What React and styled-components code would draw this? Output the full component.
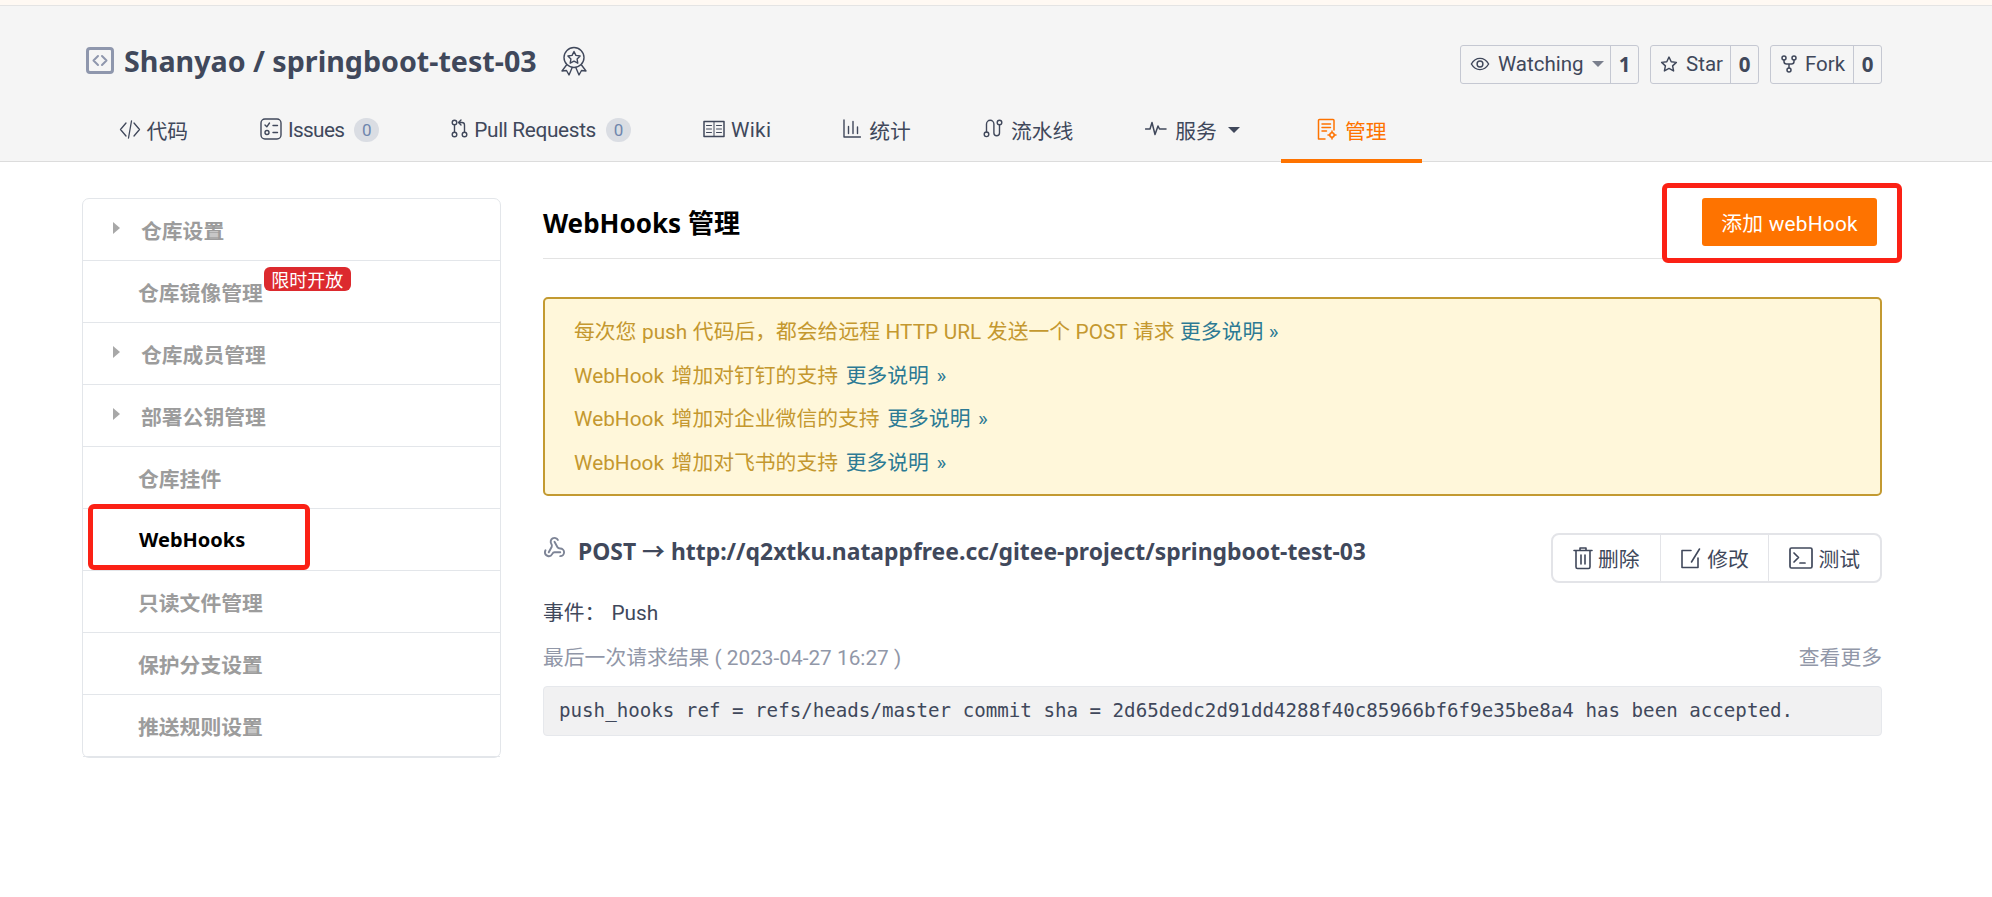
import React from "react";
import styled, { createGlobalStyle } from "styled-components";
import { Webhook } from "lucide-react";

const GlobalStyle = createGlobalStyle`
  html, body {
    margin: 0;
    padding: 0;
    background: #ffffff;
  }
  body {
    font-family: Roboto, "Noto Sans CJK SC", sans-serif;
    font-size: 20.8px;
    color: #40485b;
    overflow: hidden;
  }
`;

const boldFont = `"Noto Sans", "Noto Sans CJK SC", sans-serif`;

const Styled = {
  TopStrip: styled.div`
    height: 5px;
    background: #fff9f3;
    border-bottom: 1px solid #e4e4e4;
  `,
  Header: styled.header`
    height: 155px;
    background: #f5f5f5;
    border-bottom: 1px solid #dcdcdc;
    display: flex;
    flex-direction: column;
  `,
  TitleRow: styled.div`
    display: flex;
    align-items: center;
    justify-content: space-between;
    height: 109px;
    flex: none;
    padding: 0 110px 0 86px;
  `,
  Title: styled.div`
    display: flex;
    align-items: center;
  `,
  RepoName: styled.h1`
    margin: 0 0 0 10px;
    font-family: ${boldFont};
    font-size: 28.65px;
    font-weight: 700;
    line-height: 36px;
    color: #40485b;
  `,
  Medal: styled.span`
    display: flex;
    margin-left: 23px;
    color: #40485b;
  `,
  Stats: styled.div`
    display: flex;
    gap: 11px;
    margin-top: 7px;
  `,
  Stat: styled.div`
    display: flex;
    height: 39px;
    box-sizing: border-box;
    border: 1px solid #c5c8d2;
    border-radius: 3px;
    font-size: 20.5px;
    color: #40485b;
  `,
  StatLabel: styled.div`
    display: flex;
    align-items: center;
    gap: 8px;
    padding-left: ${(p) => p.$pad || 9}px;
    width: ${(p) => p.$width}px;
    box-sizing: border-box;
    white-space: nowrap;
  `,
  StatCount: styled.div`
    display: flex;
    align-items: center;
    justify-content: center;
    box-sizing: border-box;
    border-left: 1px solid #c5c8d2;
    width: 28px;
    font-family: ${boldFont};
    font-weight: 700;
  `,
  Caret: styled.span`
    width: 0;
    height: 0;
    border-left: 6px solid transparent;
    border-right: 6px solid transparent;
    border-top: 6px solid ${(p) => p.$color || "#7a7f8d"};
    margin-left: ${(p) => p.$gap || 0}px;
    margin-right: ${(p) => p.$after || 0}px;
  `,
  Tabs: styled.nav`
    display: flex;
    height: 46px;
    padding-left: 82.5px;
  `,
  Tab: styled.a`
    display: flex;
    align-items: center;
    gap: ${(p) => p.$gap || 6}px;
    height: 48px;
    box-sizing: border-box;
    padding: 0 36px 14px;
    color: ${(p) => (p.$active ? "#fe7300" : "#40485b")};
    border-bottom: 4px solid ${(p) => (p.$active ? "#fe7300" : "transparent")};
    svg {
      margin-top: -3px;
    }
  `,
  TabText: styled.span`
    letter-spacing: ${(p) => p.$tracking || 0}px;
  `,
  Count: styled.span`
    display: flex;
    align-items: center;
    justify-content: center;
    width: 25px;
    height: 24px;
    margin-left: 4px;
    border-radius: 12px;
    background: #dadde3;
    color: #6f86ad;
    font-size: 17px;
  `,
  Page: styled.main`
    display: flex;
    align-items: flex-start;
    gap: 42px;
    padding: 36px 0 0 82px;
  `,
  Side: styled.aside`
    position: relative;
    width: 419px;
    box-sizing: border-box;
    border: 1px solid #e3e6ea;
    border-radius: 7px;
  `,
  SideItem: styled.div`
    display: flex;
    align-items: center;
    height: 62px;
    box-sizing: border-box;
    padding-left: ${(p) => (p.$arrow ? 30 : p.$active ? 56 : 55)}px;
    font-family: ${boldFont};
    font-weight: 700;
    font-size: ${(p) => (p.$active ? 20 : 20.8)}px;
    color: ${(p) => (p.$active ? "#000000" : "#9c9c9c")};
    border-bottom: 1px solid #e3e6ea;
    &:last-child {
      border-bottom: 0;
      height: 61px;
    }
  `,
  Arrow: styled.span`
    width: 0;
    height: 0;
    border-top: 6px solid transparent;
    border-bottom: 6px solid transparent;
    border-left: 7px solid #a8a8a8;
    margin-right: 21px;
    margin-top: -4px;
  `,
  Limited: styled.span`
    display: flex;
    align-items: center;
    justify-content: center;
    width: 87px;
    height: 24px;
    margin: -25px 0 0 1px;
    border-radius: 6px;
    background: #dc2a2e;
    color: #ffffff;
    font-size: 18px;
    font-weight: 400;
  `,
  Mark: styled.span`
    position: absolute;
    box-sizing: border-box;
    border: 5px solid #fb2115;
    border-radius: 6px;
    pointer-events: none;
  `,
  Content: styled.section`
    width: 1339px;
  `,
  ContentHead: styled.div`
    display: flex;
    align-items: flex-start;
    justify-content: space-between;
    height: 60px;
    border-bottom: 1px solid #e3e3e3;
    padding-right: 5px;
  `,
  ContentTitle: styled.h2`
    margin: 7px 0 0;
    font-family: ${boldFont};
    font-size: 26px;
    font-weight: 700;
    line-height: 36px;
    color: #000000;
  `,
  AddWrap: styled.div`
    position: relative;
  `,
  AddButton: styled.button`
    display: block;
    width: 175px;
    height: 48px;
    border: 0;
    border-radius: 3px;
    background: #fe7300;
    color: #ffffff;
    font-family: inherit;
    font-size: 20.8px;
    letter-spacing: 0.25px;
  `,
  Notice: styled.div`
    height: 199px;
    margin-top: 38px;
    box-sizing: border-box;
    padding: 12px 29px;
    background: #fff7da;
    border: 2px solid #c39a31;
    border-radius: 5px;
    color: #c4982f;
    line-height: 43.7px;
  `,
  NoticeLine: styled.div`
    white-space: nowrap;
    word-spacing: ${(p) => p.$spacing}px;
  `,
  NoticeLink: styled.a`
    color: #2c7a94;
  `,
  Hook: styled.div`
    margin-top: 37px;
  `,
  HookHead: styled.div`
    display: flex;
    align-items: flex-start;
    justify-content: space-between;
  `,
  HookUrl: styled.div`
    display: flex;
    align-items: center;
    gap: 12px;
    height: 33px;
    font-family: ${boldFont};
    font-size: 22.9px;
    font-weight: 700;
    color: #40485b;
    svg {
      margin-top: -5px;
    }
  `,
  Actions: styled.div`
    display: flex;
    width: 331px;
    height: 50px;
    box-sizing: border-box;
    border: 2px solid #e3e4e8;
    border-radius: 8px;
  `,
  Action: styled.a`
    flex: ${(p) => p.$flex};
    display: flex;
    align-items: center;
    justify-content: center;
    gap: 5px;
    color: #40485b;
    & + & {
      border-left: 1px solid #e3e4e8;
    }
  `,
  EventRow: styled.div`
    display: flex;
    gap: 6px;
    margin-top: 14px;
    line-height: 32px;
  `,
  ResultRow: styled.div`
    display: flex;
    justify-content: space-between;
    margin-top: 13px;
    line-height: 32px;
    color: #9197a8;
  `,
  Result: styled.pre`
    margin: 12px 0 0;
    height: 50px;
    box-sizing: border-box;
    padding: 0 15px;
    border: 1px solid #e6e8ec;
    border-radius: 4px;
    background: #f1f1f2;
    color: #40485b;
    font-family: "DejaVu Sans Mono", monospace;
    font-size: 19.16px;
    line-height: 48px;
  `,
};

const Line = ({ size = 22, h, sw = 1.5, box, children, color = "currentColor" }) => (
  <svg
    width={size}
    height={h || size}
    viewBox={box || `0 0 ${size} ${h || size}`}
    fill="none"
    stroke={color}
    strokeWidth={sw}
    strokeLinecap="round"
    strokeLinejoin="round"
  >
    {children}
  </svg>
);

const RepoIcon = () => (
  <Line size={28} h={27} sw={3} color="#8f97ad">
    <rect x="1.5" y="1.5" width="25" height="24" rx="2.5" />
    <path d="M12 9l-4.5 4.5L12 18M16 9l4.5 4.5L16 18" strokeWidth="2" />
  </Line>
);

const MedalIcon = () => (
  <Line size={28} h={30} sw={1.4}>
    <circle cx="14" cy="11.5" r="10" />
    <path d="M14 5.5l1.9 3.9 4.2.6-3 3 .7 4.2-3.8-2-3.8 2 .7-4.2-3-3 4.2-.6z" />
    <path d="M6.5 19L2 25l4.5-.5L9 29l3-7M21.5 19l4.5 6-4.5-.5L19 29l-3-7" />
  </Line>
);

const CodeIcon = () => (
  <Line sw={1.3}>
    <path d="M7 5l-5.5 6.5L7 18M15 5l5.5 6.5L15 18M12.5 3L9.5 20" />
  </Line>
);

const IssueIcon = () => (
  <Line sw={1.4}>
    <rect x="1" y="1" width="20" height="20" rx="4" />
    <path d="M5 7l1.8 1.8L9.5 5M13 7.5h4.5M13 14.5h4.5" />
    <circle cx="7" cy="14.5" r="2" />
  </Line>
);

const PullIcon = () => (
  <Line size={17} h={19} sw={1.4}>
    <circle cx="3.5" cy="3.5" r="2.3" />
    <circle cx="3.5" cy="15.5" r="2.3" />
    <circle cx="13.5" cy="15.5" r="2.3" />
    <path d="M3.5 5.8v7.4M13.5 13.2V6q0-2.5-2.5-2.5H8M10 1L7.5 3.5 10 6" />
  </Line>
);

const WikiIcon = () => (
  <Line sw={1.5}>
    <rect x="1" y="3.5" width="20" height="15" />
    <path d="M11 3.5v15M3.5 7.5h5M3.5 11h5M3.5 14.5h5M13.5 7.5h5M13.5 11h5M13.5 14.5h5" strokeWidth="1" />
  </Line>
);

const StatsIcon = () => (
  <Line size={18} h={19} sw={1.4}>
    <path d="M1 1v17h16.5M5.5 14.5V7.5M10 14.5V2.5M14.5 14.5V8" />
  </Line>
);

const PipelineIcon = () => (
  <Line size={20} h={19} sw={1.4}>
    <circle cx="3.5" cy="15.3" r="2.3" />
    <circle cx="16.5" cy="3.5" r="2.3" />
    <path d="M3.5 13V5a3.7 3.7 0 0 1 7.4 0v9a2.8 2.8 0 0 0 5.6 0V5.8" />
  </Line>
);

const PulseIcon = () => (
  <Line size={22} h={15} sw={1.5}>
    <path d="M0.5 8h4.5l2-6.5 3 12 3-8.5 1.5 3h6.5" />
  </Line>
);

const ManageIcon = () => (
  <Line size={20} h={22} sw={1.5}>
    <path d="M8 21H1.5V2.5a1 1 0 0 1 1-1H16a1 1 0 0 1 1 1V12" />
    <path d="M5 6h8.5M5 9.5h8.5M5 13h4.5" />
    <circle cx="15" cy="17" r="2.2" />
    <path d="M15 13v1.5M15 19.5V21M11 17h1.5M17.5 17H19" />
  </Line>
);

const EyeIcon = () => (
  <Line size={20} box="0 0 22 22" sw={1.6}>
    <path d="M1.5 11C4 6.8 7.2 4.8 11 4.8s7 2 9.5 6.2c-2.5 4.2-5.7 6.2-9.5 6.2S4 15.2 1.5 11z" />
    <circle cx="11" cy="11" r="3.2" />
  </Line>
);

const StarIcon = () => (
  <Line size={18} box="0 0 22 22" sw={1.8}>
    <path d="M11 2.5l2.7 5.7 6.3.8-4.6 4.3 1.2 6.2-5.6-3.1-5.6 3.1 1.2-6.2L2 9l6.3-.8z" />
  </Line>
);

const ForkIcon = () => (
  <Line size={16} h={20} sw={1.5}>
    <circle cx="3" cy="4" r="2" />
    <circle cx="13" cy="4" r="2" />
    <circle cx="8" cy="16" r="2" />
    <path d="M3 6v1.5q0 2.5 2.5 2.5h5Q13 10 13 7.5V6M8 10v4" />
  </Line>
);

const TrashIcon = () => (
  <Line size={20} h={24} sw={1.6}>
    <path d="M1 4.5h18M7 4.5V2h6v2.5M3 4.5V21a1.5 1.5 0 0 0 1.5 1.5h11A1.5 1.5 0 0 0 17 21V4.5M8 9v9M12 9v9" />
  </Line>
);

const EditIcon = () => (
  <Line size={22} sw={1.6}>
    <path d="M11 3.5H2v17h16V11M19.5 2l-8 13" />
  </Line>
);

const TerminalIcon = () => (
  <Line size={24} h={22} sw={1.7}>
    <rect x="1" y="1" width="22" height="20" rx="1.5" />
    <path d="M5 6l4.5 4.5L5 15M11 16h5" />
  </Line>
);

const tabs = [
  { icon: <CodeIcon />, label: "代码" },
  { icon: <IssueIcon />, label: "Issues", count: 0, tracking: -0.7 },
  { icon: <PullIcon />, label: "Pull Requests", count: 0, tracking: -0.35 },
  { icon: <WikiIcon />, label: "Wiki", tracking: 0.3 },
  { icon: <StatsIcon />, label: "统计", gap: 8 },
  { icon: <PipelineIcon />, label: "流水线", gap: 8 },
  { icon: <PulseIcon />, label: "服务", gap: 8, caret: true },
  { icon: <ManageIcon />, label: "管理", gap: 8, active: true },
];

const sideItems = [
  { label: "仓库设置", arrow: true },
  { label: "仓库镜像管理", badge: "限时开放" },
  { label: "仓库成员管理", arrow: true },
  { label: "部署公钥管理", arrow: true },
  { label: "仓库挂件" },
  { label: "WebHooks", active: true },
  { label: "只读文件管理" },
  { label: "保护分支设置" },
  { label: "推送规则设置" },
];

const notices = [
  { text: "每次您 push 代码后，都会给远程 HTTP URL 发送一个 POST 请求", spacing: 0.4 },
  { text: "WebHook 增加对钉钉的支持", spacing: 2.5 },
  { text: "WebHook 增加对企业微信的支持", spacing: 2.5 },
  { text: "WebHook 增加对飞书的支持", spacing: 2.5 },
];

const App = () => (
  <>
    <GlobalStyle />
    <Styled.TopStrip />
    <Styled.Header>
      <Styled.TitleRow>
        <Styled.Title>
          <RepoIcon />
          <Styled.RepoName>Shanyao / springboot-test-03</Styled.RepoName>
          <Styled.Medal>
            <MedalIcon />
          </Styled.Medal>
        </Styled.Title>
        <Styled.Stats>
          <Styled.Stat>
            <Styled.StatLabel $width={149}>
              <EyeIcon />
              Watching
              <Styled.Caret />
            </Styled.StatLabel>
            <Styled.StatCount>1</Styled.StatCount>
          </Styled.Stat>
          <Styled.Stat>
            <Styled.StatLabel $width={79}>
              <StarIcon />
              Star
            </Styled.StatLabel>
            <Styled.StatCount>0</Styled.StatCount>
          </Styled.Stat>
          <Styled.Stat>
            <Styled.StatLabel $width={82} $pad={10}>
              <ForkIcon />
              Fork
            </Styled.StatLabel>
            <Styled.StatCount>0</Styled.StatCount>
          </Styled.Stat>
        </Styled.Stats>
      </Styled.TitleRow>
      <Styled.Tabs>
        {tabs.map((tab) => (
          <Styled.Tab key={tab.label} $active={tab.active} $gap={tab.gap}>
            {tab.icon}
            <Styled.TabText $tracking={tab.tracking}>{tab.label}</Styled.TabText>
            {tab.count !== undefined && <Styled.Count>{tab.count}</Styled.Count>}
            {tab.caret && <Styled.Caret $color="#40485b" $gap={3} $after={5} />}
          </Styled.Tab>
        ))}
      </Styled.Tabs>
    </Styled.Header>
    <Styled.Page>
      <Styled.Side>
        {sideItems.map((item) => (
          <Styled.SideItem key={item.label} $arrow={item.arrow} $active={item.active}>
            {item.arrow && <Styled.Arrow />}
            {item.label}
            {item.badge && <Styled.Limited>{item.badge}</Styled.Limited>}
          </Styled.SideItem>
        ))}
        <Styled.Mark style={{ left: 5, top: 305, width: 222, height: 66 }} />
      </Styled.Side>
      <Styled.Content>
        <Styled.ContentHead>
          <Styled.ContentTitle>WebHooks 管理</Styled.ContentTitle>
          <Styled.AddWrap>
            <Styled.AddButton>添加 webHook</Styled.AddButton>
            <Styled.Mark style={{ left: -40, top: -15, width: 240, height: 80 }} />
          </Styled.AddWrap>
        </Styled.ContentHead>
        <Styled.Notice>
          {notices.map((notice) => (
            <Styled.NoticeLine key={notice.text} $spacing={notice.spacing}>
              {notice.text} <Styled.NoticeLink>更多说明 »</Styled.NoticeLink>
            </Styled.NoticeLine>
          ))}
        </Styled.Notice>
        <Styled.Hook>
          <Styled.HookHead>
            <Styled.HookUrl>
              <Webhook size={23} strokeWidth={2} color="#7d8496" />
              POST → http://q2xtku.natappfree.cc/gitee-project/springboot-test-03
            </Styled.HookUrl>
            <Styled.Actions>
              <Styled.Action $flex="108">
                <TrashIcon />
                删除
              </Styled.Action>
              <Styled.Action $flex="109">
                <EditIcon />
                修改
              </Styled.Action>
              <Styled.Action $flex="112">
                <TerminalIcon />
                测试
              </Styled.Action>
            </Styled.Actions>
          </Styled.HookHead>
          <Styled.EventRow>
            <span>事件：</span>
            <span>Push</span>
          </Styled.EventRow>
          <Styled.ResultRow>
            <span>最后一次请求结果 ( 2023-04-27 16:27 )</span>
            <span>查看更多</span>
          </Styled.ResultRow>
          <Styled.Result>
            push_hooks ref = refs/heads/master commit sha = 2d65dedc2d91dd4288f40c85966bf6f9e35be8a4 has been accepted.
          </Styled.Result>
        </Styled.Hook>
      </Styled.Content>
    </Styled.Page>
  </>
);

export default App;
